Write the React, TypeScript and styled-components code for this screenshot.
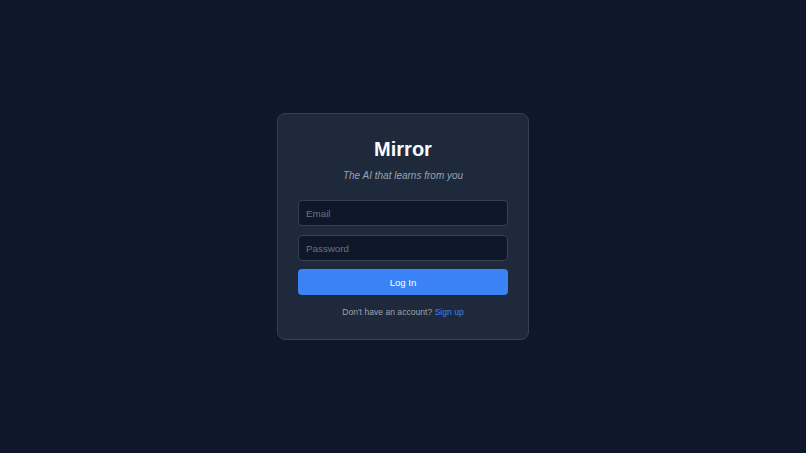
import React from 'react';
import styled, { createGlobalStyle } from 'styled-components';

const GlobalStyle = createGlobalStyle`
	html, body {
		margin: 0;
		padding: 0;
		background: #0f172a;
	}
	* {
		box-sizing: border-box;
	}
`;

const Page = styled.div`
	display: flex;
	align-items: center;
	justify-content: center;
	width: 100vw;
	height: 100vh;
	background: #0f172a;
	font-family: 'Liberation Sans', Arial, sans-serif;
`;

const Card = styled.div`
	display: flex;
	flex-direction: column;
	width: 252px;
	padding: 23px 20px 21px;
	background: #1e293b;
	border: 1px solid #334155;
	border-radius: 8px;
`;

const Title = styled.h1`
	margin: 0;
	font-size: 20px;
	line-height: 24px;
	font-weight: 700;
	color: #f8fafc;
	text-align: center;
`;

const Subtitle = styled.p`
	margin: 8px 0 17px;
	font-size: 10px;
	line-height: 14px;
	font-style: italic;
	color: #94a3b8;
	text-align: center;
`;

const Form = styled.form`
	display: flex;
	flex-direction: column;
	gap: 9px;
`;

const Input = styled.input`
	width: 100%;
	height: 26px;
	padding: 0 7px;
	background: #0f172a;
	border: 1px solid #334155;
	border-radius: 4px;
	font-family: inherit;
	font-size: 9.8px;
	color: #e2e8f0;
	outline: none;
	&::placeholder {
		color: #6b7280;
	}
`;

const Button = styled.button`
	width: 100%;
	height: 26px;
	margin-top: -1px;
	background: #3b82f6;
	border: none;
	border-radius: 4px;
	font-family: inherit;
	font-size: 9.6px;
	color: #ffffff;
	cursor: pointer;
`;

const Footer = styled.p`
	margin: 11px 0 0;
	font-size: 8.6px;
	line-height: 12px;
	color: #9ca3af;
	text-align: center;
`;

const Link = styled.a`
	color: #3b82f6;
	text-decoration: none;
`;

const App = () => {
	return (
		<Page>
			<GlobalStyle />
			<Card>
				<Title>Mirror</Title>
				<Subtitle>The AI that learns from you</Subtitle>
				<Form onSubmit={(e) => e.preventDefault()}>
					<Input type="email" placeholder="Email" />
					<Input type="password" placeholder="Password" />
					<Button type="submit">Log In</Button>
				</Form>
				<Footer>
					Don&apos;t have an account? <Link href="#">Sign up</Link>
				</Footer>
			</Card>
		</Page>
	);
};

export default App;
